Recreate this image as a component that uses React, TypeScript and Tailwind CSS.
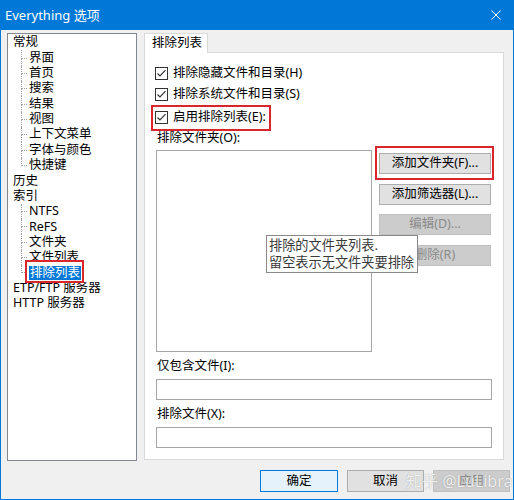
import React from "react";

function CheckBox() {
  return (
    <svg width="13" height="13" viewBox="0 0 13 13" className="shrink-0">
      <rect x="0.5" y="0.5" width="12" height="12" fill="#fff" stroke="#333" />
      <polyline points="2.5,6.5 5,9 10.5,3.2" fill="none" stroke="#333" strokeWidth="1.2" />
    </svg>
  );
}

function Connector({ last }: { last?: boolean }) {
  return (
    <div className="w-[6px] self-stretch flex flex-col shrink-0">
      <div className="flex-1 border-l border-b border-dotted border-[#a0a0a0]" />
      <div className={last ? "flex-1" : "flex-1 border-l border-dotted border-[#a0a0a0]"} />
    </div>
  );
}

function Parent({ label }: { label: string }) {
  return <div className="h-[15.35px] flex items-center leading-none whitespace-nowrap">{label}</div>;
}

function Child({ label, last, selected }: { label: string; last?: boolean; selected?: boolean }) {
  return (
    <div className="h-[15.35px] flex items-stretch ml-[8px] whitespace-nowrap">
      <Connector last={last} />
      <div className="flex items-center ml-[2px]">
        {selected ? (
          <span className="relative bg-[#0078d7] text-white px-[1px] h-[14px] flex items-center leading-none">
            {label}
            <span className="absolute left-[-4px] top-[-6px] w-[59px] h-[23px] border-2 border-[#d8262c]" />
          </span>
        ) : (
          <span className="leading-none">{label}</span>
        )}
      </div>
    </div>
  );
}

function Tree() {
  return (
    <div className="w-[130px] h-[428px] bg-white border border-[#828790] pl-[5px] pt-[1px] shrink-0">
      <Parent label="常规" />
      <Child label="界面" />
      <Child label="首页" />
      <Child label="搜索" />
      <Child label="结果" />
      <Child label="视图" />
      <Child label="上下文菜单" />
      <Child label="字体与颜色" />
      <Child label="快捷键" last />
      <Parent label="历史" />
      <Parent label="索引" />
      <Child label="NTFS" />
      <Child label="ReFS" />
      <Child label="文件夹" />
      <Child label="文件列表" />
      <Child label="排除列表" last selected />
      <Parent label="ETP/FTP 服务器" />
      <Parent label="HTTP 服务器" />
    </div>
  );
}

function Btn({ label, disabled, className }: { label: string; disabled?: boolean; className?: string }) {
  return (
    <div
      className={
        "h-[21px] w-[112px] flex items-center justify-center leading-none border " +
        (disabled
          ? "bg-[#cccccc] border-[#bfbfbf] text-[#8a8a8a] "
          : "bg-[#e1e1e1] border-[#adadad] text-black ") +
        (className ?? "")
      }
    >
      {label}
    </div>
  );
}

function Panel() {
  return (
    <div className="w-[360px] h-[427px] flex flex-col shrink-0">
      <div className="flex">
        <div className="w-[64px] h-[20px] bg-white border-t border-l border-r border-[#d9d9d9] flex items-center pl-[7px] leading-none -mb-px relative z-10">
          排除列表
        </div>
      </div>
      <div className="flex-1 bg-white border border-[#d9d9d9] pl-[11px] flex flex-col">
        <div className="mt-[12px] h-[16px] flex items-center gap-[5px] ml-[-1px] leading-none">
          <CheckBox />
          <span>排除隐藏文件和目录(H)</span>
        </div>
        <div className="mt-[5px] h-[16px] flex items-center gap-[5px] ml-[-1px] leading-none">
          <CheckBox />
          <span>排除系统文件和目录(S)</span>
        </div>
        <div className="mt-[7px] h-[16px] flex items-center gap-[5px] ml-[-1px] leading-none relative w-fit">
          <CheckBox />
          <span>启用排除列表(E):</span>
          <span className="absolute left-[-4px] top-[-4px] w-[120px] h-[26px] border-2 border-[#d8262c]" />
        </div>
        <div className="mt-[5px] h-[16px] flex items-center ml-[1px] leading-none">排除文件夹(O):</div>
        <div className="mt-[4px] flex items-start">
          <div className="relative w-[216px] h-[202px] bg-white border border-[#a6a6a6] shrink-0">
            <div className="absolute left-[109px] top-[84px] w-[152px] h-[38px] bg-white border border-[#8a8a8a] text-[#3a3a3a] text-[13.2px] leading-[17px] pl-[2px] pt-[1px] whitespace-nowrap z-20">
              <div>排除的文件夹列表.</div>
              <div>留空表示无文件夹要排除</div>
            </div>
          </div>
          <div className="ml-[7px] flex flex-col">
            <div className="relative mt-[3px]">
              <Btn label="添加文件夹(F)..." />
              <span className="absolute left-[-4px] top-[-7px] w-[119px] h-[34px] border-2 border-[#d8262c]" />
            </div>
            <Btn label="添加筛选器(L)..." className="mt-[10px]" />
            <Btn label="编辑(D)..." disabled className="mt-[9px]" />
            <Btn label="删除(R)" disabled className="mt-[10px]" />
          </div>
        </div>
        <div className="mt-[6px] h-[16px] flex items-center ml-[1px] leading-none">仅包含文件(I):</div>
        <div className="mt-[5px] w-[336px] h-[21px] bg-white border border-[#a6a6a6]" />
        <div className="mt-[6px] h-[16px] flex items-center ml-[1px] leading-none">排除文件(X):</div>
        <div className="mt-[5px] w-[336px] h-[21px] bg-white border border-[#a6a6a6]" />
      </div>
    </div>
  );
}

export default function App() {
  return (
    <div className="w-[514px] h-[500px] flex flex-col overflow-hidden font-['Noto_Sans','Noto_Sans_CJK_SC',sans-serif] text-[12.5px] text-black">
      <div className="h-[30px] shrink-0 bg-[#0078d7] flex items-center justify-between pl-[5px] pr-[13px] text-white text-[13px]">
        <span className="leading-none">Everything 选项</span>
        <svg width="10" height="10" viewBox="0 0 10 10">
          <path d="M0.5 0.5L9.5 9.5M9.5 0.5L0.5 9.5" stroke="#fff" strokeWidth="1" />
        </svg>
      </div>
      <div className="flex-1 flex flex-col bg-[#f0f0f0] border-l border-r border-b border-[#0078d7] pl-[6px] pt-[3px] pb-[7px]">
        <div className="flex gap-[7px]">
          <Tree />
          <Panel />
        </div>
        <div className="mt-auto flex pl-[253px] relative">
          <div className="w-[78px] h-[22px] flex items-center justify-center leading-none border border-[#0078d7] bg-[#e5f1fb]">
            确定
          </div>
          <div className="ml-[9px] w-[77px] h-[22px] flex items-center justify-center leading-none border border-[#adadad] bg-[#e1e1e1]">
            取消
          </div>
          <div className="ml-[9px] w-[77px] h-[22px] flex items-center justify-center leading-none border border-[#bfbfbf] bg-[#cccccc] text-[#8a8a8a]">
            应用
          </div>
          <div className="absolute left-[399px] top-[0px] h-[22px] flex items-center text-[16px] leading-none text-white/85 whitespace-nowrap [text-shadow:0_0_1px_rgba(0,0,0,0.35)]">
            知乎 @LuLibra
          </div>
        </div>
      </div>
    </div>
  );
}
